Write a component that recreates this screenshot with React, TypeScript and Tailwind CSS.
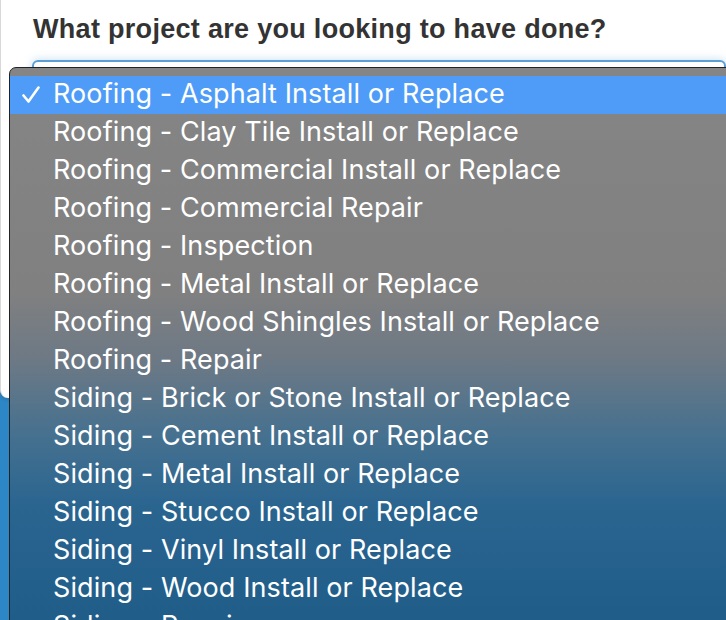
import React from 'react';

const options = [
  'Roofing - Asphalt Install or Replace',
  'Roofing - Clay Tile Install or Replace',
  'Roofing - Commercial Install or Replace',
  'Roofing - Commercial Repair',
  'Roofing - Inspection',
  'Roofing - Metal Install or Replace',
  'Roofing - Wood Shingles Install or Replace',
  'Roofing - Repair',
  'Siding - Brick or Stone Install or Replace',
  'Siding - Cement Install or Replace',
  'Siding - Metal Install or Replace',
  'Siding - Stucco Install or Replace',
  'Siding - Vinyl Install or Replace',
  'Siding - Wood Install or Replace',
  'Siding - Repair',
];

const Check = () => (
  <svg width="18" height="18" viewBox="0 0 18 18" fill="none">
    <path d="M1.5 9.5 L6.5 15.5 L16.5 1.5" stroke="white" strokeWidth="2.6" strokeLinecap="round" strokeLinejoin="round" />
  </svg>
);

const App = () => {
  const selected = 0;

  return (
    <div className="relative w-[726px] h-[620px] overflow-hidden bg-[#2d86c6] font-['Liberation_Sans',Arial,sans-serif]">
      {/* page behind the open menu */}
      <div className="h-[398px] bg-white rounded-bl-[8px] border-l border-[#d8d8d8] shadow-[0_1px_4px_rgba(0,0,0,0.15)]">
        <h2 className="pl-[32px] pt-[13px] text-[27px] leading-[32px] font-bold text-[#333] tracking-[0.3px]">
          What project are you looking to have done?
        </h2>
        <div className="ml-[31px] mt-[15px] h-[46px] rounded-[6px] border-2 border-[#5a9fd8] bg-white shadow-[0_0_10px_rgba(90,159,216,0.35)]" />
      </div>

      {/* native select menu */}
      <div className="absolute left-[9px] top-[67px] -right-[10px] -bottom-[10px] rounded-tl-[7px] border border-[#222] bg-[linear-gradient(to_bottom,#858585_0%,#808080_40%,#6d7985_52%,#47718f_65%,#2a6590_78%,#1f5c88_100%)] pt-[8px]">
        {options.map((opt, i) => (
          <div
            key={opt}
            className={`flex items-center h-[38px] pb-[2px] text-[27px] text-white font-['Inter',sans-serif] tracking-[0.1px] ${
              i === selected ? 'bg-[#4e9cf8]' : ''
            }`}
          >
            <span className="w-[43px] pl-[12px] pt-[2px] flex items-center">{i === selected ? <Check /> : null}</span>
            <span>{opt}</span>
          </div>
        ))}
      </div>
    </div>
  );
};

export default App;
